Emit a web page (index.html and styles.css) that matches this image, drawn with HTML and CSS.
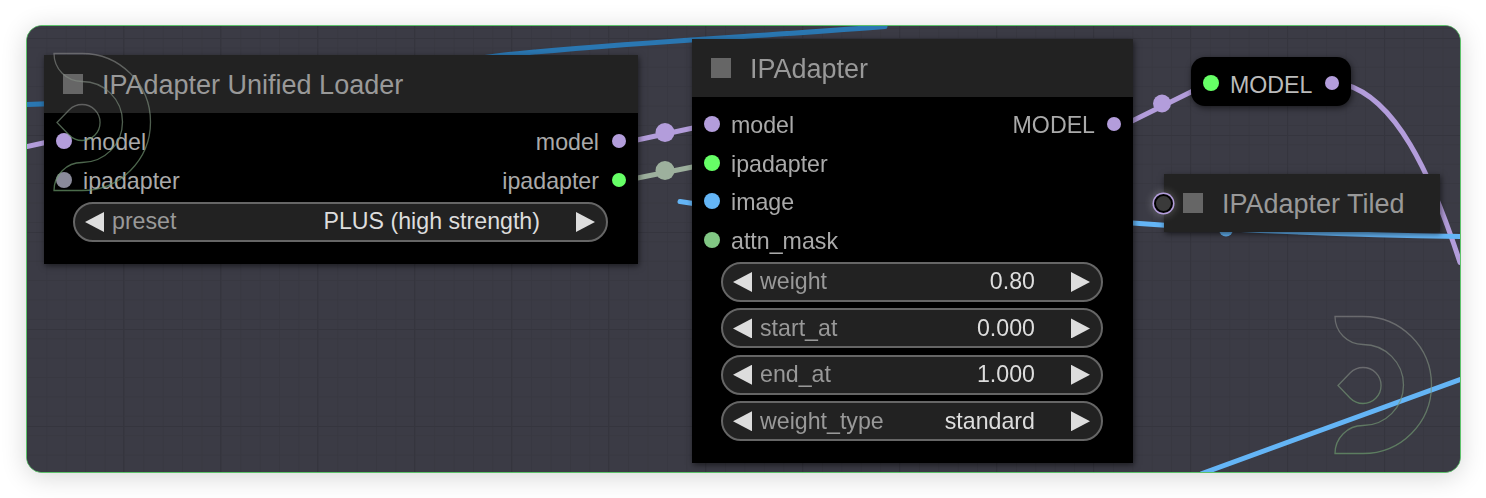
FILE: index.html
```html
<!DOCTYPE html>
<html lang="en">
<head>
<meta charset="utf-8">
<title>IPAdapter</title>
<link rel="stylesheet" href="styles.css">
</head>
<body>
<main class="canvas">
  <div class="graph">
    <svg class="layer" viewBox="27 26 1433 445" aria-hidden="true">
      <g class="link link-dim">
        <path d="M27 104 C180 100 300 80 500 55 C620 42 760 36 885 26"/>
      </g>
      <g class="link link-purple">
        <path d="M27 146 L50 141"/>
        <path d="M630 141 L700 126"/>
        <circle cx="665" cy="132" r="9.5"/>
        <path d="M1125 124 L1200 87"/>
        <circle cx="1162" cy="103" r="9"/>
        <path d="M1345 84 C1395 98 1430 170 1460 262"/>
      </g>
      <g class="link link-sage">
        <path d="M630 179 L700 165"/>
        <circle cx="665" cy="170" r="9.5"/>
      </g>
      <g class="link link-blue">
        <path d="M680 201 L700 204"/>
        <path d="M1125 222 C1220 229 1340 234 1460 236"/>
        <circle cx="1226" cy="229" r="7"/>
        <path d="M1202 473 L1460 379"/>
      </g>
    </svg>

    <section class="node node-loader">
      <header class="title"><span class="box"></span><span class="title-text">IPAdapter Unified Loader</span></header>
      <div class="slots">
        <div class="row">
          <span class="slot"><i class="dot purple"></i><span class="label">model</span></span>
          <span class="slot out"><span class="label">model</span><i class="dot small purple"></i></span>
        </div>
        <div class="row">
          <span class="slot"><i class="dot slate"></i><span class="label">ipadapter</span></span>
          <span class="slot out"><span class="label">ipadapter</span><i class="dot small green"></i></span>
        </div>
      </div>
      <div class="widgets">
        <div class="widget"><i class="arrow left"></i><span class="name">preset</span><span class="value">PLUS (high strength)</span><i class="arrow right"></i></div>
      </div>
    </section>

    <section class="node node-adapter">
      <header class="title"><span class="box"></span><span class="title-text">IPAdapter</span></header>
      <div class="slots">
        <div class="row">
          <span class="slot"><i class="dot purple"></i><span class="label">model</span></span>
          <span class="slot out"><span class="label">MODEL</span><i class="dot small purple"></i></span>
        </div>
        <div class="row"><span class="slot"><i class="dot green"></i><span class="label">ipadapter</span></span></div>
        <div class="row"><span class="slot"><i class="dot blue"></i><span class="label">image</span></span></div>
        <div class="row"><span class="slot"><i class="dot mint"></i><span class="label">attn_mask</span></span></div>
      </div>
      <div class="widgets">
        <div class="widget"><i class="arrow left"></i><span class="name">weight</span><span class="value">0.80</span><i class="arrow right"></i></div>
        <div class="widget"><i class="arrow left"></i><span class="name">start_at</span><span class="value">0.000</span><i class="arrow right"></i></div>
        <div class="widget"><i class="arrow left"></i><span class="name">end_at</span><span class="value">1.000</span><i class="arrow right"></i></div>
        <div class="widget"><i class="arrow left"></i><span class="name">weight_type</span><span class="value">standard</span><i class="arrow right"></i></div>
      </div>
    </section>

    <section class="node reroute">
      <i class="dot green"></i><span class="label">MODEL</span><i class="dot small purple"></i>
    </section>

    <section class="node node-tiled">
      <header class="title"><span class="box"></span><span class="title-text">IPAdapter Tiled</span></header>
      <i class="ring"></i>
    </section>

    <svg class="layer" viewBox="27 26 1433 445" aria-hidden="true">
      <defs>
        <linearGradient id="fade" x1="0" y1="0" x2="0" y2="1">
          <stop offset="0" stop-color="#8a8a8a" stop-opacity=".6"/>
          <stop offset="1" stop-color="#6b9a6b" stop-opacity=".7"/>
        </linearGradient>
      </defs>
      <g class="mark">
        <path d="M1335 316 A28 28 0 0 0 1363 344 A40.5 40.5 0 0 1 1363 425 A28 28 0 0 0 1335 453 H1363 A68.5 68.5 0 0 0 1363 316 Z"/>
        <path d="M1338 385 L1350.3 372.3 A18 18 0 1 1 1350.3 397.7 Z"/>
      </g>
      <g class="mark" transform="translate(-1281 -263)">
        <path d="M1335 316 A28 28 0 0 0 1363 344 A40.5 40.5 0 0 1 1363 425 A28 28 0 0 0 1335 453 H1363 A68.5 68.5 0 0 0 1363 316 Z"/>
        <path d="M1338 385 L1350.3 372.3 A18 18 0 1 1 1350.3 397.7 Z"/>
      </g>
    </svg>
  </div>
</main>
</body>
</html>
```
FILE: styles.css
```css
* { box-sizing: border-box; }

html, body { margin: 0; background: #fff; }

body {
  padding: 25px 25px 25px 26px;
  font-family: "Liberation Sans", Arial, sans-serif;
  height: 498px;
  overflow: hidden;
}

.canvas {
  height: 448px;
  border: 1px solid #5cc26a;
  border-radius: 16px;
  overflow: hidden;
  background: #3b3b45;
  box-shadow: 0 4px 26px rgba(0, 0, 0, .16);
}

.graph {
  position: relative;
  height: 100%;
  filter: blur(.45px);
  background-color: #3b3b45;
  background-image:
    linear-gradient(to right, #35353e 1px, transparent 1px),
    linear-gradient(to bottom, #35353e 1px, transparent 1px),
    linear-gradient(to right, #383841 1px, transparent 1px),
    linear-gradient(to bottom, #383841 1px, transparent 1px);
  background-size: 97px 97px, 97px 97px, 19.4px 19.4px, 19.4px 19.4px;
  background-position: -1px 12px, -1px 12px, 0 2px, 0 2px;
}

.layer {
  position: absolute;
  inset: 0;
  width: 100%;
  height: 100%;
  pointer-events: none;
}

.link path { fill: none; stroke-width: 5; stroke-linecap: round; }
.link-dim path { stroke: #2a77b2; }
.link-purple path { stroke: #b39ddb; }
.link-purple circle { fill: #b39ddb; }
.link-sage path { stroke: #9db09d; }
.link-sage circle { fill: #9db09d; }
.link-blue path { stroke: #64b5f6; }
.link-blue circle { fill: #64b5f6; }

.mark path { fill: none; stroke: url(#fade); stroke-width: 1.3; }

.node {
  position: absolute;
  background: #000;
  box-shadow: 1px 2px 6px rgba(0, 0, 0, .55);
  color: #aaa;
  font-size: 23.2px;
}

.node-loader { left: 17px; top: 29px; width: 594px; height: 209px; }
.node-adapter { left: 665px; top: 13px; width: 441px; height: 424px; }
.node-tiled { left: 1137px; top: 148px; width: 276px; height: 58px; }

.title {
  display: flex;
  align-items: center;
  height: 58px;
  padding-left: 19px;
  gap: 19px;
  background: #222;
  color: #999;
  font-size: 27px;
}

.title-text { padding-top: 2px; }

.box { width: 20px; height: 20px; background: #666; flex: none; }

.slots { padding-top: 7.5px; }
.node-loader .slots { padding-top: 8.5px; }

.row {
  display: flex;
  justify-content: space-between;
  align-items: center;
  height: 38.8px;
  padding: 0 12px;
}

.slot { display: flex; align-items: center; gap: 11px; }
.slot.out { gap: 12px; }
.node-loader .slot.out { gap: 13px; }

.label { padding-top: 3px; }

.dot {
  display: block;
  flex: none;
  width: 16px;
  height: 16px;
  border-radius: 50%;
}

.dot.small { width: 14px; height: 14px; }

.purple { background: #b39ddb; }
.green { background: #66ff66; }
.blue { background: #64b5f6; }
.mint { background: #81c784; }
.slate { background: #8a8a9a; }

.widgets {
  display: flex;
  flex-direction: column;
  gap: 6.4px;
  margin-top: 2.3px;
  padding: 0 30px 0 29px;
}

.node-loader .widgets { margin-top: 2.9px; }

.widget {
  display: flex;
  align-items: center;
  height: 40px;
  padding: 0 11px 0 10px;
  border: 2px solid #666;
  border-radius: 20px;
  background: #222;
}

.name { color: #999; margin-left: 8px; }
.value { color: #ddd; margin-left: auto; margin-right: 36px; }

.arrow {
  display: block;
  flex: none;
  width: 19px;
  height: 20px;
  background: #ddd;
}

.arrow.left { clip-path: polygon(100% 0, 100% 100%, 0 50%); }
.arrow.right { clip-path: polygon(0 0, 100% 50%, 0 100%); }

.reroute {
  left: 1164px;
  top: 31px;
  width: 160px;
  height: 49px;
  display: flex;
  align-items: center;
  padding: 3px 12px 0;
  gap: 11px;
  border-radius: 14px;
}

.reroute .label { margin-right: 2px; padding-top: 4px; color: #bbb; }

.ring {
  position: absolute;
  left: -10px;
  top: 20px;
  width: 19px;
  height: 19px;
  border-radius: 50%;
  background: #3a3a3a;
  border: 2px solid #000;
  box-shadow: 0 0 0 1.5px #b39ddb, 0 0 8px 2px rgba(255, 255, 255, .25);
}
```
